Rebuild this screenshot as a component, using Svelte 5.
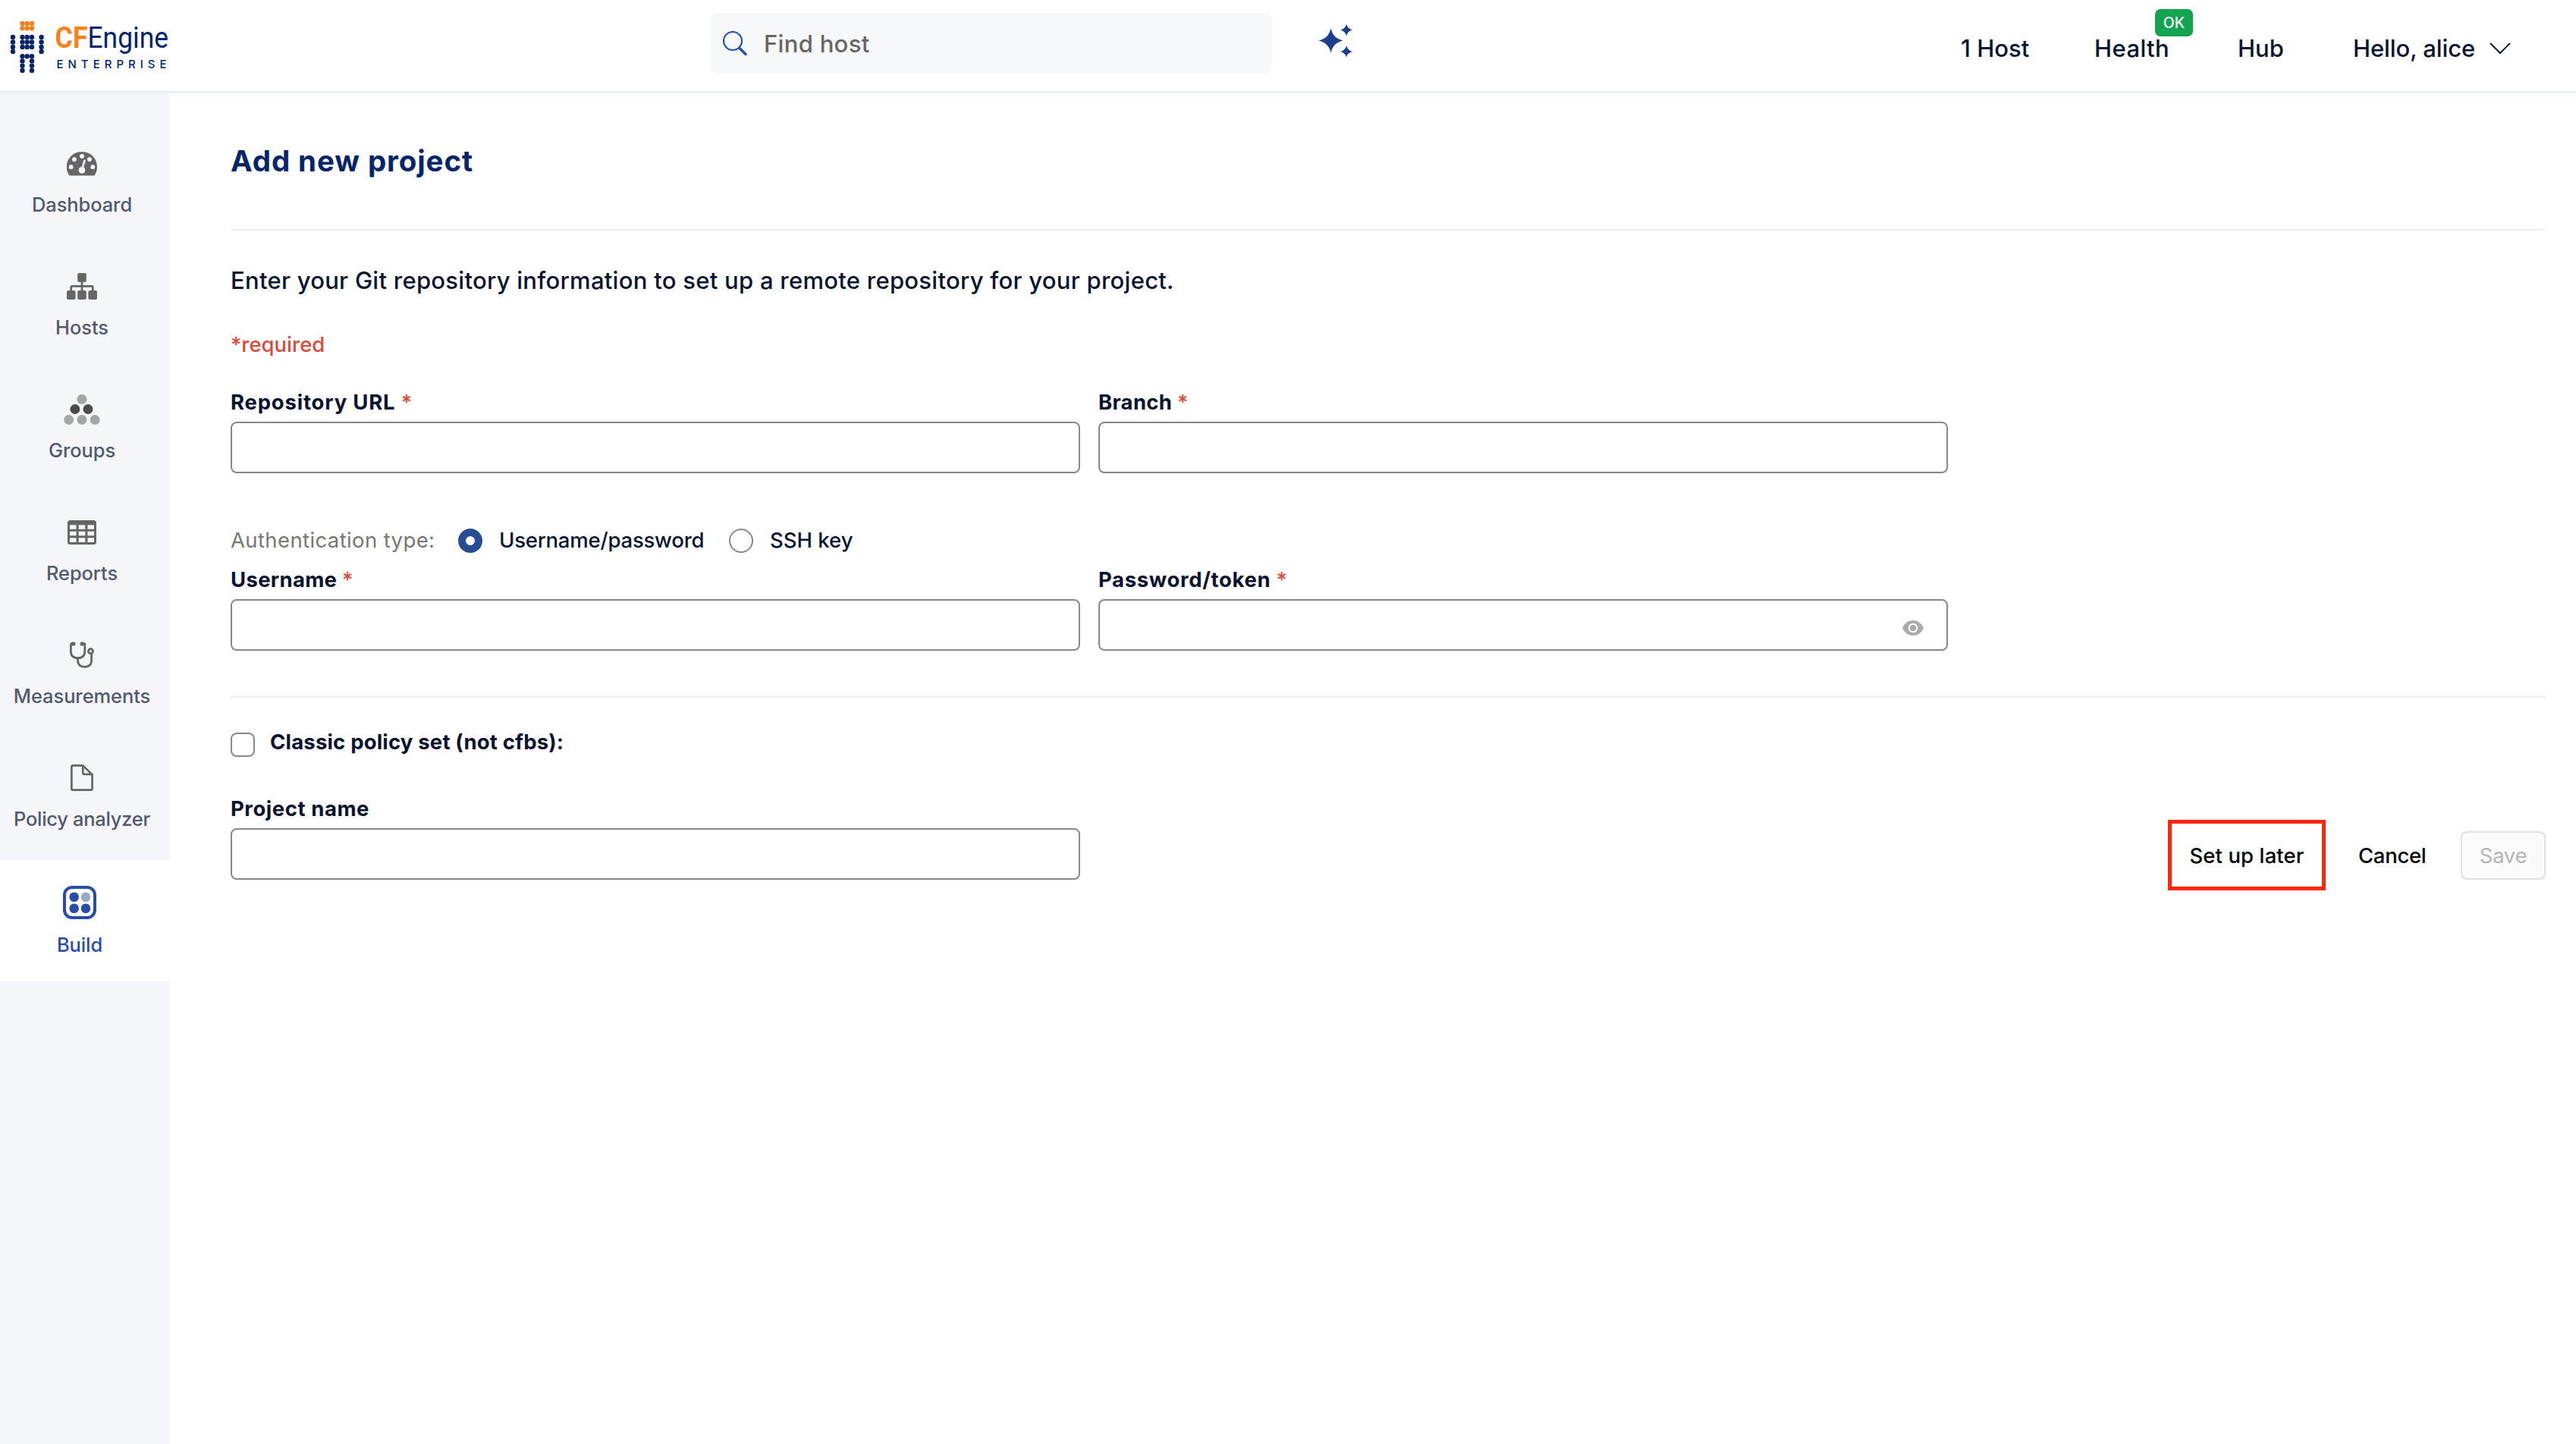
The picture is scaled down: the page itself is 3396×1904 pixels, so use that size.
<script>
  const navItems = [
    { id: 'dashboard', label: 'Dashboard' },
    { id: 'hosts', label: 'Hosts' },
    { id: 'groups', label: 'Groups' },
    { id: 'reports', label: 'Reports' },
    { id: 'measurements', label: 'Measurements' },
    { id: 'policy', label: 'Policy analyzer' },
    { id: 'build', label: 'Build' }
  ];

  const logoDots = [
    [17, 49], [17, 55.5], [17, 62], [17, 68],
    [54.6, 49], [54.6, 55.5], [54.6, 62], [54.6, 68],
    [29.5, 49], [35.7, 49], [42, 49],
    [29.5, 55.5], [35.7, 55.5], [42, 55.5],
    [29.5, 62], [35.7, 62], [42, 62],
    [29.5, 74.2], [35.7, 74.2], [42, 74.2],
    [29.5, 80.4], [42, 80.4],
    [29.5, 86.7], [42, 86.7],
    [29.5, 93], [42, 93]
  ];

  const headDots = [
    [29.5, 31], [35.7, 31], [42, 31],
    [29.5, 37.3], [35.7, 37.3], [42, 37.3]
  ];

  let active = $state('build');
  let authType = $state('password');
  let classic = $state(false);
  let search = $state('');
  let form = $state({ url: '', branch: '', username: '', password: '', name: '' });

  let canSave = $derived(form.url && form.branch && form.username && form.password);
</script>

{#snippet icon(id)}
  {#if id === 'dashboard'}
    <svg width="40" height="32" viewBox="0 0 40 32">
      <path fill="#666" d="M20 0a20 20 0 0 1 20 20c0 4-1 7.600-3 10.800-.3.500-.7.700-1.200.700H4.200c-.5 0-.9-.2-1.200-.7A20 20 0 0 1 20 0z" />
      <g fill="#f4f6fa">
        <circle cx="20" cy="6" r="2.900" />
        <circle cx="10" cy="10.200" r="2.900" />
        <circle cx="30" cy="10.200" r="2.900" />
        <circle cx="5.700" cy="20.200" r="2.900" />
        <circle cx="34.300" cy="20.200" r="2.900" />
        <circle cx="20" cy="24.400" r="4.300" />
      </g>
      <path d="M20.500 22l3-10.200" stroke="#f4f6fa" stroke-width="2.600" stroke-linecap="round" />
    </svg>
  {:else if id === 'hosts'}
    <svg width="40" height="35" viewBox="0 0 40 35">
      <g fill="#666">
        <rect x="14.200" y="0" width="11.600" height="12" rx="2" />
        <rect x="0" y="23" width="11.600" height="12" rx="2" />
        <rect x="14.200" y="23" width="11.600" height="12" rx="2" />
        <rect x="28.400" y="23" width="11.600" height="12" rx="2" />
      </g>
      <path d="M20 11v13M5.700 24v-5.500q0-1.200 1.200-1.200h26.200q1.200 0 1.200 1.200V24" fill="none" stroke="#666" stroke-width="2.800" />
    </svg>
  {:else if id === 'groups'}
    <svg width="48" height="40" viewBox="0 0 48 40">
      <g fill="#a6a6a6">
        <circle cx="24" cy="6.500" r="6.500" />
        <circle cx="6.700" cy="33.500" r="6.500" />
        <circle cx="24" cy="33.500" r="6.500" />
        <circle cx="41.200" cy="33.500" r="6.500" />
      </g>
      <g fill="#4c4c4c">
        <circle cx="14.900" cy="19.500" r="6.500" />
        <circle cx="32" cy="19.500" r="6.500" />
      </g>
    </svg>
  {:else if id === 'reports'}
    <svg width="38" height="32" viewBox="0 0 38 32">
      <path fill="#666" fill-rule="evenodd" d="M3.500 0h31A3.500 3.500 0 0 1 38 3.500v25a3.500 3.500 0 0 1-3.500 3.500h-31A3.500 3.500 0 0 1 0 28.500v-25A3.500 3.500 0 0 1 3.500 0zM3 6.200v5.600h8.500V6.200zM14.700 6.200v5.600h8.600V6.200zM26.500 6.200v5.600H35V6.200zM3 14.700v5.600h8.500v-5.600zM14.700 14.700v5.600h8.600v-5.600zM26.500 14.700v5.600H35v-5.600zM3 23.200V29h8.500v-5.800zM14.700 23.200V29h8.600v-5.800zM26.500 23.200V29H35v-5.800z" />
    </svg>
  {:else if id === 'measurements'}
    <svg width="32" height="35" viewBox="0 0 32 35">
      <g fill="none" stroke="#666" stroke-width="2.800">
        <path d="M4.500 2.500h-1.500q-1.600 0-1.600 1.600V12.500q0 9.200 9.200 9.200t9.200-9.200V4.100q0-1.600-1.600-1.600H16" />
        <path d="M10.600 22v3q0 8.300 9 8.300t9-8.300V16" />
        <circle cx="27.500" cy="12.700" r="3" />
      </g>
      <g fill="#666">
        <circle cx="4.800" cy="2.900" r="2.700" />
        <circle cx="16.200" cy="2.900" r="2.700" />
      </g>
    </svg>
  {:else if id === 'policy'}
    <svg width="30" height="35" viewBox="0 0 30 35">
      <g fill="none" stroke="#666" stroke-width="2.700" stroke-linejoin="round">
        <path d="M3 1.400h13.200L28.600 13.400V32q0 1.600-1.600 1.600H3Q1.400 33.600 1.400 32V3Q1.400 1.400 3 1.400z" />
        <path d="M16.300 1.400v9.800q0 1.700 1.700 1.700h10.600" />
      </g>
    </svg>
  {:else}
    <svg width="44" height="44" viewBox="0 0 44 44">
      <rect x="2" y="2" width="40" height="40" rx="10" fill="none" stroke="#284ca8" stroke-width="4" />
      <g fill="#284ca8">
        <circle cx="14.700" cy="14.700" r="6.300" />
        <circle cx="14.700" cy="29.700" r="6.300" />
        <circle cx="30" cy="29.700" r="6.300" />
      </g>
      <circle cx="30" cy="14.700" r="6.300" fill="#99a6cf" />
    </svg>
  {/if}
{/snippet}

{#snippet star()}<span class="star">*</span>{/snippet}

<div class="app">
  <header>
    <svg class="logo" width="232" height="120" viewBox="0 0 232 120">
      {#each headDots as [x, y]}
        <circle cx={x} cy={y} r="3.200" fill="#f58220" />
      {/each}
      {#each logoDots as [x, y]}
        <circle cx={x} cy={y} r="3.200" fill="#05256b" />
      {/each}
      <text class="brand-cf" x="72.500" y="62.500" textLength="43" lengthAdjust="spacingAndGlyphs">CF</text>
      <text class="brand-engine" x="115.500" y="62.500" textLength="106.500" lengthAdjust="spacingAndGlyphs">Engine</text>
      <text class="brand-sub" x="74.500" y="89.700" textLength="145" lengthAdjust="spacing">ENTERPRISE</text>
    </svg>

    <label class="search">
      <svg width="32" height="32" viewBox="0 0 32 32" fill="none" stroke="#284fa8">
        <circle cx="13" cy="13" r="12" stroke-width="2.200" />
        <path d="M22 22.500l8 8" stroke-width="3.600" stroke-linecap="round" />
      </svg>
      <input type="text" placeholder="Find host" bind:value={search} />
    </label>

    <svg class="sparkles" width="46" height="46" viewBox="0 0 46 46" fill="#1c3f8c">
      <path d="M16.500 5q2.500 13.500 16 16.500q-13.500 3-16 16.500q-2.500-13.500-16-16.500q13.500-3 16-16.500z" />
      <path d="M37 0q1.700 6 8 7.500q-6.300 1.500-8 7.500q-1.700-6-8-7.500q6.300-1.500 8-7.500z" />
      <path d="M37 28.500q1.700 6 8 7.500q-6.300 1.500-8 7.500q-1.700-6-8-7.500q6.300-1.500 8-7.500z" />
    </svg>

    <nav class="top-nav">
      <span>1 Host</span>
      <span class="health">Health<span class="badge">OK</span></span>
      <span>Hub</span>
      <span class="user">
        Hello, alice
        <svg width="28" height="16" viewBox="0 0 28 16">
          <path d="M1.500 1.500L14 14L26.500 1.500" fill="none" stroke="#0a1430" stroke-width="1.900" stroke-linecap="round" stroke-linejoin="round" />
        </svg>
      </span>
    </nav>
  </header>

  <div class="body">
    <aside>
      {#each navItems as item}
        <button class="nav-item {item.id}" class:active={active === item.id} onclick={() => (active = item.id)}>
          <span class="nav-icon">{@render icon(item.id)}</span>
          <span class="nav-label">{item.label}</span>
        </button>
      {/each}
    </aside>

    <main>
      <h1>Add new project</h1>
      <hr class="title-rule" />
      <p class="intro">Enter your Git repository information to set up a remote repository for your project.</p>
      <p class="required">*required</p>

      <div class="row repo">
        <label class="field">
          <span class="url">Repository URL {@render star()}</span>
          <input type="text" bind:value={form.url} />
        </label>
        <label class="field">
          <span class="branch">Branch {@render star()}</span>
          <input type="text" bind:value={form.branch} />
        </label>
      </div>

      <div class="auth">
        <span class="auth-title">Authentication type:</span>
        <label class="auth-password">
          <input type="radio" value="password" bind:group={authType} />
          <span>Username/password</span>
        </label>
        <label class="auth-ssh">
          <input type="radio" value="ssh" bind:group={authType} />
          <span>SSH key</span>
        </label>
      </div>

      <div class="row credentials">
        <label class="field">
          <span class="username">Username {@render star()}</span>
          <input type="text" bind:value={form.username} />
        </label>
        <label class="field secret">
          <span class="password">Password/token {@render star()}</span>
          <input type="password" bind:value={form.password} />
          <svg class="eye" width="28" height="20" viewBox="0 0 28 20">
            <path d="M14 0C7.500 0 2.500 4 0 10c2.500 6 7.500 10 14 10s11.500-4 14-10C25.500 4 20.500 0 14 0z" fill="#aaa" />
            <circle cx="14" cy="10" r="5.300" fill="#aaa" stroke="#fff" stroke-width="1.900" />
          </svg>
        </label>
      </div>

      <hr class="form-rule" />

      <label class="classic">
        <input type="checkbox" bind:checked={classic} />
        <span>Classic policy set (not cfbs):</span>
      </label>

      <div class="footer">
        <label class="field">
          <span class="project">Project name</span>
          <input type="text" bind:value={form.name} />
        </label>
        <div class="actions">
          <button class="later">Set up later</button>
          <button class="cancel">Cancel</button>
          <button class="save" disabled={!canSave}>Save</button>
        </div>
      </div>
    </main>
  </div>
</div>

<style>
  :global(body) {
    background: #fff;
  }

  .app {
    min-height: 1904px;
    display: flex;
    flex-direction: column;
    font-family: Inter, 'Liberation Sans', sans-serif;
    font-size: 27.5px;
    font-weight: 500;
    color: #0a1430;
  }

  .app *,
  .app {
    box-sizing: border-box;
  }

  button,
  input {
    font: inherit;
    color: inherit;
    letter-spacing: inherit;
  }

  button {
    background: none;
    border: 0;
    padding: 0;
    white-space: nowrap;
  }

  header {
    display: flex;
    align-items: flex-start;
    height: 122px;
    border-bottom: 2px solid #e6eaf5;
  }

  .logo {
    overflow: visible;
  }

  .brand-cf,
  .brand-engine {
    font-family: Roboto, sans-serif;
    font-size: 39px;
  }

  .brand-cf {
    font-weight: 700;
    fill: #f58220;
  }

  .brand-engine {
    font-weight: 400;
    fill: #05256b;
  }

  .brand-sub {
    font-family: Inter, sans-serif;
    font-size: 15px;
    font-weight: 500;
    fill: #05256b;
  }

  .search {
    display: flex;
    align-items: center;
    gap: 22px;
    width: 740px;
    height: 80px;
    margin: 17px 0 0 705px;
    padding: 0 16px;
    border-radius: 8px;
    background: #f7f8fa;
  }

  .search input {
    flex: 1;
    border: 0;
    outline: 0;
    padding: 0;
    background: none;
    font-size: 31px;
    letter-spacing: 0.3px;
  }

  .search input::placeholder {
    color: #666;
    opacity: 1;
  }

  .sparkles {
    margin: 32px 0 0 61px;
  }

  .top-nav {
    display: grid;
    grid-template-columns: 176px 189px 152px auto;
    width: 811px;
    margin: 46px 0 0 auto;
    font-size: 31px;
    line-height: 36px;
  }

  .health {
    position: relative;
    justify-self: start;
    letter-spacing: 0.4px;
  }

  .badge {
    position: absolute;
    left: 80px;
    top: -34px;
    width: 50px;
    height: 36px;
    border-radius: 7px;
    background: #13a452;
    color: #fff;
    font-size: 19.5px;
    letter-spacing: 0;
    text-align: center;
  }

  .user {
    display: flex;
    align-items: center;
    gap: 19px;
    letter-spacing: -0.1px;
  }

  .body {
    display: flex;
    flex: 1;
  }

  aside {
    width: 224px;
    padding-top: 40px;
    background: #f4f6fa;
  }

  .nav-item {
    display: flex;
    flex-direction: column;
    align-items: center;
    width: 216px;
    height: 162px;
    padding-top: 34px;
    font-size: 25.5px;
    letter-spacing: -0.1px;
    color: #515a6e;
  }

  .nav-item.policy {
    letter-spacing: -0.3px;
  }

  .nav-icon {
    display: flex;
    align-items: center;
    height: 39px;
  }

  .nav-label {
    margin-top: 20px;
    line-height: 30px;
  }

  .nav-item.active {
    width: 224px;
    height: 160px;
    padding-right: 14px;
    background: #fff;
    color: #284ca8;
  }

  .active .nav-icon {
    height: 44px;
  }

  .active .nav-label {
    margin-top: 19px;
  }

  main {
    flex: 1;
    padding: 66px 40px 0 80px;
  }

  h1 {
    margin: 0;
    font-size: 38.5px;
    font-weight: 700;
    line-height: 48px;
    letter-spacing: 0.9px;
    color: #05256b;
  }

  hr {
    height: 2px;
    margin: 0;
    border: 0;
    background: #eee;
  }

  .title-rule {
    margin-top: 66px;
  }

  .intro {
    margin: 46px 0 0;
    font-size: 31px;
    line-height: 40px;
    letter-spacing: 0.27px;
  }

  .required {
    margin: 44px 0 0;
    line-height: 40px;
    color: #db4b3a;
  }

  .row {
    display: flex;
    gap: 24px;
  }

  .repo {
    margin-top: 36px;
  }

  .field {
    display: flex;
    flex-direction: column;
    gap: 6px;
    width: 1120px;
  }

  .field > span {
    font-weight: 700;
    line-height: 40px;
  }

  .url {
    letter-spacing: 0.8px;
  }

  .branch,
  .username {
    letter-spacing: 0.3px;
  }

  .password {
    letter-spacing: 0.65px;
  }

  .project {
    letter-spacing: 0.55px;
  }

  .star {
    font-weight: 500;
    color: #db4b3a;
  }

  .field input {
    width: 100%;
    height: 68px;
    padding: 0 16px;
    border: 2px solid #888;
    border-radius: 8px;
    background: #fff;
  }

  .auth {
    display: flex;
    align-items: flex-start;
    height: 32px;
    margin-top: 73px;
    line-height: 30px;
  }

  .auth label {
    display: flex;
    gap: 22px;
  }

  .auth-title {
    width: 300px;
    font-weight: 400;
    letter-spacing: 0.38px;
    color: #777;
  }

  .auth-password {
    width: 357px;
    letter-spacing: -0.2px;
  }

  input[type='radio'],
  input[type='checkbox'] {
    appearance: none;
    flex: none;
    width: 32px;
    height: 32px;
    margin: 0;
    border: 2px solid #888;
    border-radius: 50%;
    background: #fff;
  }

  input[type='radio']:checked {
    border: 10px solid #284c96;
  }

  input[type='checkbox'] {
    border-radius: 8px;
  }

  input[type='checkbox']:checked {
    background: #284ca8;
  }

  .credentials {
    margin-top: 15px;
  }

  .secret {
    position: relative;
  }

  .eye {
    position: absolute;
    right: 32px;
    bottom: 20px;
  }

  .form-rule {
    margin-top: 60px;
  }

  .classic {
    display: flex;
    gap: 20px;
    height: 32px;
    margin-top: 46px;
    font-weight: 700;
    line-height: 24px;
    letter-spacing: 0.18px;
  }

  .footer {
    display: flex;
    align-items: flex-end;
    justify-content: space-between;
    margin-top: 48px;
  }

  .actions {
    display: flex;
    align-items: center;
    height: 64px;
    color: #000;
  }

  .later {
    width: 208px;
    height: 93px;
    margin-top: -1px;
    border: 5px solid #ff2600;
    letter-spacing: 0.1px;
  }

  .cancel {
    width: 88px;
    margin: 0 47px 0 43px;
    letter-spacing: -0.3px;
  }

  .save {
    width: 112px;
    height: 64px;
    border: 2px solid #e0e0e0;
    border-radius: 8px;
    background: #fafafa;
    font-weight: 400;
    letter-spacing: -0.3px;
    color: #b5b5b5;
  }
</style>
